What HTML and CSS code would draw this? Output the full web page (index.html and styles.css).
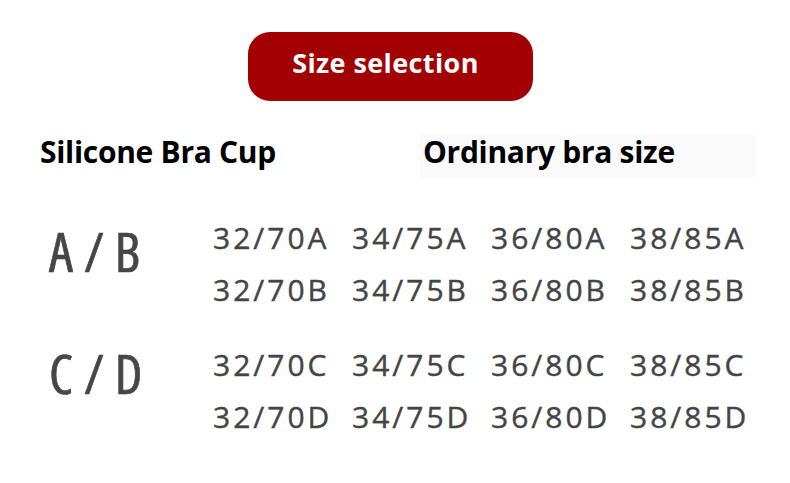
FILE: index.html
```html
<!DOCTYPE html>
<html>
<head>
<meta charset="utf-8">
<link rel="stylesheet" href="styles.css">
</head>
<body>
<div class="page">
  <div class="btn">Size selection</div>
  <div class="heads">
    <div class="head head-left">Silicone Bra Cup</div>
    <div class="head-box"><span class="head">Ordinary bra size</span></div>
  </div>
  <div class="group">
    <div class="label label-ab">A/B</div>
    <div class="sizes">
      <span>32/70A</span><span>34/75A</span><span>36/80A</span><span>38/85A</span>
      <span>32/70B</span><span>34/75B</span><span>36/80B</span><span>38/85B</span>
    </div>
  </div>
  <div class="group group-2">
    <div class="label label-cd">C/D</div>
    <div class="sizes">
      <span>32/70C</span><span>34/75C</span><span>36/80C</span><span>38/85C</span>
      <span>32/70D</span><span>34/75D</span><span>36/80D</span><span>38/85D</span>
    </div>
  </div>
</div>
</body>
</html>
```
FILE: styles.css
```css
html, body {
  margin: 0;
  padding: 0;
  background: #ffffff;
}
.page {
  width: 790px;
  height: 483px;
  padding-top: 32px;
  box-sizing: border-box;
  display: flex;
  flex-direction: column;
}
.btn {
  margin-left: 248px;
  width: 285px;
  height: 69px;
  border-radius: 22px;
  background: #a30003;
  color: #ffffff;
  font-family: "Open Sans", "DejaVu Sans", sans-serif;
  font-weight: 700;
  font-size: 27px;
  letter-spacing: 0.4px;
  display: flex;
  align-items: center;
  justify-content: center;
  padding-bottom: 9px;
  padding-right: 10px;
  box-sizing: border-box;
}
.heads {
  display: flex;
  align-items: center;
  margin-top: 34px;
  height: 42px;
}
.head {
  font-family: "Open Sans", "DejaVu Sans", sans-serif;
  font-stretch: 88%;
  font-weight: 700;
  font-size: 30px;
  color: #000000;
  letter-spacing: -0.3px;
}
.head-left {
  margin-left: 40px;
  width: 380px;
  padding-bottom: 10px;
}
.head-box {
  width: 337px;
  height: 42px;
  background: #fafafa;
  display: flex;
  align-items: center;
  padding-left: 3px;
  padding-bottom: 10px;
  box-sizing: border-box;
}
.group {
  display: flex;
  margin-top: 35px;
}
.group-2 {
  margin-top: 23px;
}
.label {
  font-family: "Open Sans", "DejaVu Sans", sans-serif;
  font-stretch: 87.5%;
  font-weight: 500;
  font-size: 54px;
  line-height: 54px;
  color: #464646;
  -webkit-text-stroke: 0.7px #464646;
  letter-spacing: 11px;
  width: 213px;
  padding-left: 49px;
  box-sizing: border-box;
  white-space: nowrap;
}
.label-ab {
  margin-top: 12px;
}
.label-cd {
  margin-top: 7px;
}
.sizes {
  display: grid;
  grid-template-columns: repeat(4, 139px);
  grid-auto-rows: 52px;
}
.sizes span {
  font-family: "Open Sans", "DejaVu Sans", sans-serif;
  font-weight: 500;
  font-size: 30px;
  line-height: 52px;
  color: #444444;
  -webkit-text-stroke: 0.4px #444444;
  letter-spacing: 3px;
  white-space: nowrap;
}
```
